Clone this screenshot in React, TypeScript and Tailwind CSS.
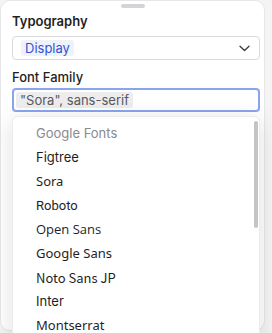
import React from "react";

const fonts: { name: string; family: string }[] = [
  { name: "Figtree", family: "Inter, 'Liberation Sans', sans-serif" },
  { name: "Sora", family: "'Noto Sans', 'Liberation Sans', sans-serif" },
  { name: "Roboto", family: "Roboto, sans-serif" },
  { name: "Open Sans", family: "'Open Sans', sans-serif" },
  { name: "Google Sans", family: "'Noto Sans', sans-serif" },
  { name: "Noto Sans JP", family: "'Noto Sans CJK JP', 'Noto Sans', sans-serif" },
  { name: "Inter", family: "Inter, sans-serif" },
  { name: "Montserrat", family: "'Noto Sans', 'Liberation Sans', sans-serif" },
];

export default function App() {
  return (
    <div
      className="w-[272px] h-[333px] bg-[#f4f4f5] overflow-hidden relative"
      style={{ fontFamily: "Inter, 'Liberation Sans', sans-serif" }}
    >
      <div className="w-[265px] h-[331px] bg-white border border-[#e6e6e8] rounded-[10px] relative">
        <div className="flex justify-center pt-[3px]">
          <div className="w-[24px] h-[4px] rounded-full bg-[#d4d4d8]" />
        </div>
        <div className="px-[11px] pt-[5px]">
          <div className="text-[13px] font-semibold text-[#1f1f1f] leading-[16px]">Typography</div>
          <div className="mt-[7px] h-[24px] border border-[#d9d9dc] rounded-[4px] flex items-center pl-[8px] pr-[9px] w-[248px]">
            <span className="bg-[#eef2fd] text-[#3653d4] text-[13px] rounded-[3px] px-[4px] leading-[16px] py-[0px]">
              Display
            </span>
            <div className="flex-1" />
            <svg width="11" height="7" viewBox="0 0 11 7" fill="none">
              <path d="M1 1.2L5.5 5.5L10 1.2" stroke="#3a3a3a" strokeWidth="1.3" strokeLinecap="round" strokeLinejoin="round" />
            </svg>
          </div>
          <div className="mt-[9px] text-[13px] font-medium text-[#1f1f1f] leading-[16px]">Font Family</div>
          <div className="mt-[3px] h-[24px] border-2 border-[#8ba4f0] rounded-[4px] flex items-center pl-[2px] w-[248px]">
            <span className="bg-[#ededee] text-[#5a5a5e] text-[13px] rounded-[3px] px-[4px] leading-[16px]">
              "Sora", sans-serif
            </span>
          </div>
        </div>
      </div>

      <div className="absolute left-[12px] top-[116px] w-[248px] h-[240px] bg-white rounded-[6px] border border-[#ececee] shadow-[0_4px_22px_rgba(0,0,0,0.13)]">
        <div className="pt-[5px]">
          <div className="h-[24px] flex items-center pl-[23px] text-[13px] text-[#8a8a8e]">Google Fonts</div>
          {fonts.map((f) => (
            <div
              key={f.name}
              className="h-[24px] flex items-center pl-[23px] text-[13px] text-[#1f1f1f]"
              style={{ fontFamily: f.family }}
            >
              {f.name}
            </div>
          ))}
        </div>
        <div className="absolute right-[1px] top-[4px] w-[4px] h-[107px] rounded-full bg-[#c3c3c8]" />
      </div>
    </div>
  );
}
